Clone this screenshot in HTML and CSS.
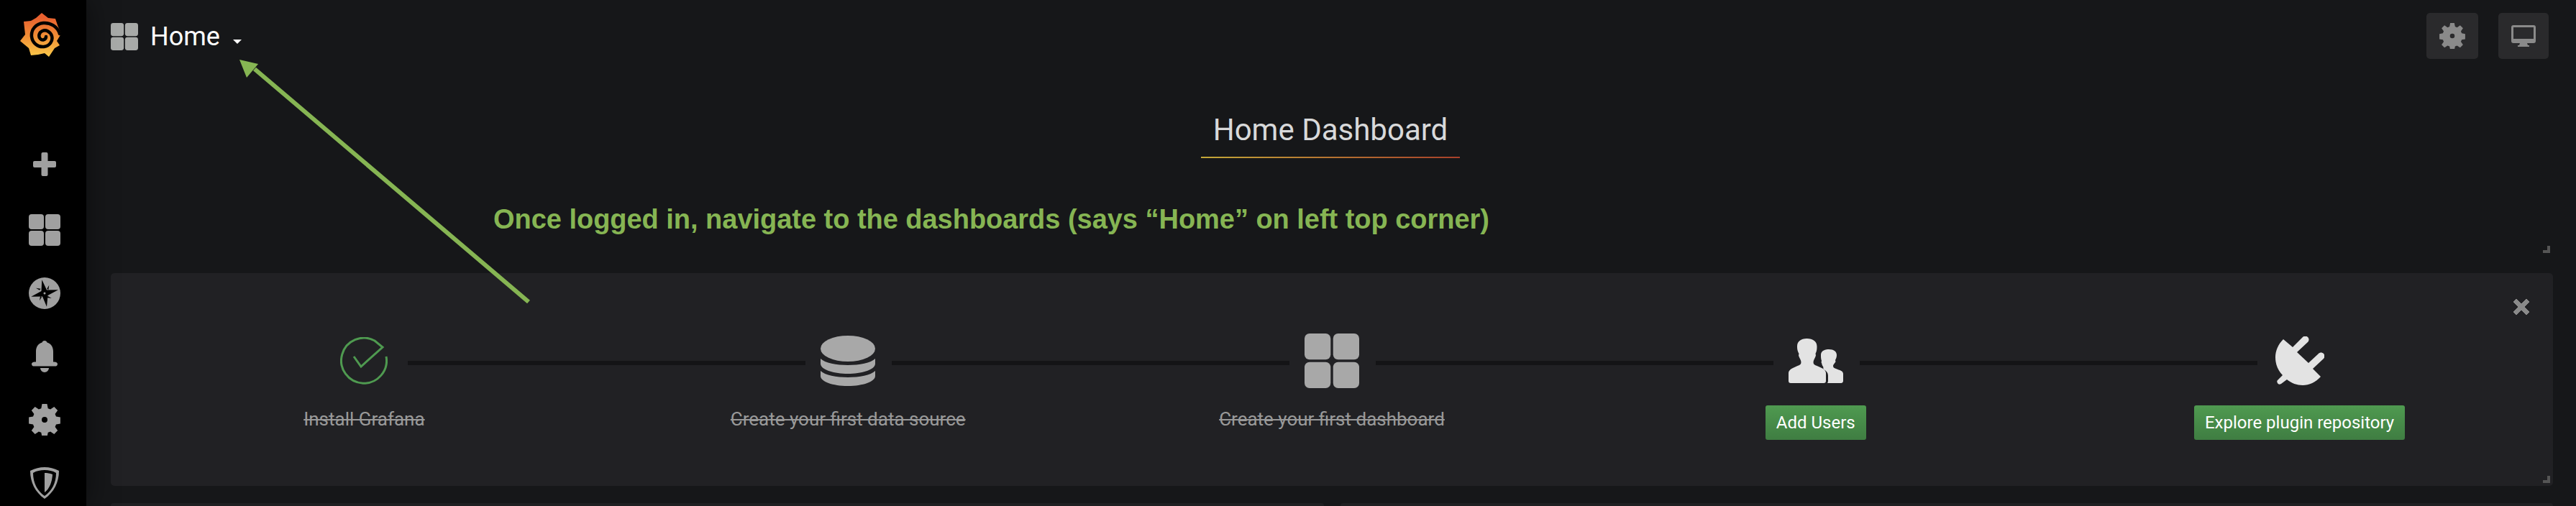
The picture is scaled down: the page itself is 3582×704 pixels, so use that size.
FILE: index.html
```html
<!DOCTYPE html>
<html lang="en">
<head>
  <meta charset="utf-8">
  <title>Home Dashboard</title>
  <link rel="stylesheet" href="styles.css">
</head>
<body>

  <svg width="0" height="0" class="defs">
    <defs>
      <symbol id="ico-grid" viewBox="0 0 44 44">
        <rect x="0" y="0" width="21" height="21" rx="4"/>
        <rect x="23" y="0" width="21" height="21" rx="4"/>
        <rect x="0" y="23" width="21" height="21" rx="4"/>
        <rect x="23" y="23" width="21" height="21" rx="4"/>
      </symbol>
      <symbol id="ico-gear" viewBox="0 0 44 44">
        <path fill-rule="evenodd" d="M18.5 0h7l1.2 6.2 3.4 1.4 5.2-3.6 4.9 4.9-3.6 5.2 1.4 3.4 5.9 1v9l-5.9 1-1.4 3.4 3.6 5.2-4.9 4.9-5.2-3.6-3.4 1.4-1.2 6.1h-7l-1.2-6.1-3.4-1.4-5.2 3.6-4.9-4.9 3.600-5.2-1.4-3.4-5.9-1v-9l5.9-1 1.4-3.4-3.6-5.2 4.9-4.9 5.2 3.6 3.4-1.4zM22 18a4 4 0 1 0 0 8 4 4 0 0 0 0-8z"/>
      </symbol>
    </defs>
  </svg>

  <nav class="sidebar">
    <a class="logo">
      <svg viewBox="0 0 57 62" width="57" height="62">
        <defs>
          <linearGradient id="logoFill" x1="0" y1="0" x2="0" y2="1">
            <stop offset="0.1" stop-color="#e8602f"/>
            <stop offset="0.55" stop-color="#f08f35"/>
            <stop offset="1" stop-color="#fbca4a"/>
          </linearGradient>
        </defs>
        <path fill="url(#logoFill)" d="M30 0L39 7 49 8 52 17 57 29 51 39 55 45 48 49 40 61 34 56 25 58 15 59 12 49 0 39 7 30 5 12 15 11 22 7z"/>
        <path class="logo-spiral" d="M55 29C52 19 42 13 32 14 22 15 15 23 16 33 17 42 25 48 33 47 41 46 46 39 44 32 42 26 36 23 31 25 26 27 25 33 28 36 31 39 36 37 36 33"/>
      </svg>
    </a>
    <ul class="side-menu">
      <li class="side-plus">
        <svg width="32" height="33" viewBox="0 0 32 33"><rect x="11.500" y="0" width="9" height="33" rx="2"/><rect x="0" y="12" width="32" height="9" rx="2"/></svg>
      </li>
      <li><svg width="44" height="44"><use href="#ico-grid"/></svg></li>
      <li>
        <svg width="44" height="44" viewBox="0 0 44 44">
          <circle cx="22" cy="22" r="22"/>
          <path class="star" d="M18.300 3.300L25 17.500 41 17.300 26.500 25 25 40.700 19 26.500 3.300 26.700 17.500 19z"/>
          <path class="star" d="M28.300 10.700l-3 5 2 1.500zM31.700 29l-5-3-1.500 2zM15 32.300l3-5-2-1.500zM10 14.700l5 3 1.500-2z"/>
          <circle cx="22" cy="22" r="1.500"/>
        </svg>
      </li>
      <li>
        <svg width="36" height="44" viewBox="0 0 36 44"><path d="M18 0c2 0 3 1 3.500 2.500C27 4 30 9 30 15v14.500c3 0 6 .5 6 3s-2 3-3 3H3c-1 0-3-.5-3-3s3-3 6-3V15C6 9 9 4 14.500 2.500 15 1 16 0 18 0zM12 38h12c0 3-3 6-6 6s-6-3-6-6z"/></svg>
      </li>
      <li><svg width="44" height="44"><use href="#ico-gear"/></svg></li>
      <li>
        <svg width="40" height="44" viewBox="0 0 40 44"><path fill-rule="evenodd" d="M20 0c7 0 13 1.500 20 5 0 16-7 30-20 39C7 35 0 21 0 5 7 1.500 13 0 20 0zm0 4C14 4 9 5 4 8c0 14 6 25 16 32 10-7 16-18 16-32-5-3-10-4-16-4z"/><path d="M20 8c4 0 7 .5 11 2-.5 10-4 20-11 25z"/></svg>
      </li>
    </ul>
  </nav>

  <main class="main">
    <header class="navbar">
      <div class="dash-picker">
        <svg class="dash-picker-icon" width="38" height="38"><use href="#ico-grid"/></svg>
        <span class="dash-picker-name">Home</span>
        <span class="caret"></span>
      </div>
      <div class="navbar-buttons">
        <button class="nav-btn nav-btn-wide"><svg width="36" height="36"><use href="#ico-gear"/></svg></button>
        <button class="nav-btn">
          <svg width="34" height="30" viewBox="0 0 34 30"><path fill-rule="evenodd" d="M3 0h28a3 3 0 0 1 3 3v19a3 3 0 0 1-3 3H22l1 3h2v2H9v-2h2l1-3H3a3 3 0 0 1-3-3V3a3 3 0 0 1 3-3zm0 3v16h28V3z"/></svg>
        </button>
      </div>
    </header>

    <div class="title-panel">
      <h1 class="panel-title">Home Dashboard</h1>
      <span class="resize-handle"></span>
    </div>

    <section class="getting-started">
      <span class="close-x">
        <svg width="24" height="24" viewBox="0 0 24 24"><path d="M5 1l7 7 7-7 4 4-7 7 7 7-4 4-7-7-7 7-4-4 7-7-7-7z" stroke="#8a8a8a" stroke-width="1" stroke-linejoin="round"/></svg>
      </span>

      <div class="step">
        <div class="step-icon">
          <svg width="66" height="66" viewBox="0 0 66 66" class="ico-check"><path d="M19 27L29 41 59 14 48 5A31.500 31.500 0 1 0 64 27"/></svg>
        </div>
        <span class="step-label done">Install Grafana</span>
      </div>

      <div class="step">
        <div class="step-icon">
          <svg width="76" height="70" viewBox="0 0 76 70" class="ico-done"><ellipse cx="38" cy="18" rx="38" ry="18"/><path d="M0 32c6 6 22 9 38 9s32-3 38-9v7c0 8-17 14-38 14S0 47 0 39z"/><path d="M0 49c6 6 22 9 38 9s32-3 38-9v7c0 8-17 14-38 14S0 64 0 56z"/></svg>
        </div>
        <span class="step-label done">Create your first data source</span>
      </div>

      <div class="step">
        <div class="step-icon">
          <svg width="76" height="76" class="ico-done"><use href="#ico-grid"/></svg>
        </div>
        <span class="step-label done">Create your first dashboard</span>
      </div>

      <div class="step">
        <div class="step-icon">
          <svg width="76" height="62" viewBox="0 0 76 62" class="ico-todo"><path d="M25.500 0C34 0 39.500 4 39.500 11c0 5-.5 7-2 10 0 1 1 2 0 4-1 3-3 5-3 8 0 3 2 4 5 5 6 2.500 12.500 5 12.500 10v11c0 2-1 3-3 3H3c-2 0-3-1-3-3V48c0-5 7-7.500 12.500-10 3-1 5-2 5-5 0-3-2-5-3-8-1-2 0-3 0-4-1.500-3-2.500-5-2.500-10C12 4 17 0 25.500 0z"/><path d="M56 15c7 0 11 3 11 8 0 3-1 5-2 7 0 1 1 2 0 3-1 2-3 3-3 5 0 2 1 3 4 4 5 2 10 3 10 7v10c0 1-1 3-3 3H54c1-1 1-3 1-5V52c0-4-2-7-6-9-.5-1-1-2-.5-3-1-2-2-3-2.500-6-1-1 0-2 0-3-1-3-1-5-1-8 0-5 4-8 11-8z"/></svg>
        </div>
        <a class="btn-success">Add Users</a>
      </div>

      <div class="step step-last">
        <div class="step-icon">
          <svg width="68" height="68" viewBox="0 0 68 68" class="ico-todo"><path d="M11 4L24 15 38 1c2-2 5-2 7 0s2 5 0 7L30 22 46 37 60 24c2-2 5-2 7 0s2 5 0 7L52 45 63 56C56 64 47 68 38 68c-8 0-16-3-22-8l-8 6c-2 1-4 1-5-1s-1-3 0-4l7-7C3 47 0 38 0 29 0 20 4 11 11 4z"/></svg>
        </div>
        <a class="btn-success">Explore plugin repository</a>
      </div>

      <span class="resize-handle"></span>
    </section>

    <div class="lower-panels">
      <div class="lower-panel"></div>
      <div class="lower-panel"></div>
    </div>
  </main>

  <p class="note">Once logged in, navigate to the dashboards (says “Home” on left top corner)</p>
  <svg class="note-arrow" width="420" height="350" viewBox="0 0 420 350">
    <path d="M405 340L24 16" stroke="#86b553" stroke-width="6" fill="none"/>
    <path d="M3 3L29 9 13 28z" fill="#86b553"/>
  </svg>

</body>
</html>
```

FILE: styles.css
```css
html, body {
  height: 100%;
}

body {
  margin: 0;
  display: flex;
  height: 704px;
  overflow: hidden;
  background-color: #161719;
  font-family: Roboto, "Liberation Sans", sans-serif;
  color: #d8d9da;
}

.defs {
  position: absolute;
}

/* left menu */
.sidebar {
  flex: 0 0 120px;
  height: 704px;
  background-color: #000;
  box-shadow: 0 0 40px rgba(0, 0, 0, 0.5);
  z-index: 1;
}

.logo {
  display: block;
  padding: 18px 0 0 28px;
  height: 62px;
}

.logo-spiral {
  fill: none;
  stroke: #000;
  stroke-width: 4.500;
  stroke-linecap: round;
}

.side-menu {
  list-style: none;
  margin: 0;
  padding: 0;
}

.side-menu li {
  height: 88px;
  display: flex;
  align-items: center;
  justify-content: center;
  margin-left: 4px;
}

.side-menu li:last-child {
  height: 76px;
  align-items: flex-start;
  padding-top: 22px;
  box-sizing: border-box;
}

.side-menu .side-plus {
  margin-top: 104px;
  margin-bottom: 4px;
}

.side-menu svg {
  fill: #a0a0a0;
}

.side-menu .star {
  fill: #000;
}

/* top bar */
.main {
  flex: 1;
  min-width: 0;
  padding: 0 32px 0 34px;
}

.navbar {
  height: 100px;
  display: flex;
  justify-content: space-between;
  padding-top: 18px;
  box-sizing: border-box;
}

.dash-picker {
  display: flex;
  align-items: center;
  height: 46px;
  margin-top: 10px;
}

.dash-picker-icon {
  fill: #a8aaa8;
}

.dash-picker-name {
  font-size: 36px;
  color: #fff;
  margin-left: 17px;
}

.caret {
  width: 0;
  height: 0;
  margin: 14px 0 0 18px;
  border-style: solid;
  border-width: 6px 6px 0;
  border-color: #fff transparent transparent;
}

.navbar-buttons {
  display: flex;
  gap: 28px;
  margin-right: 6px;
}

.nav-btn {
  width: 70px;
  height: 64px;
  padding: 0;
  display: flex;
  align-items: center;
  justify-content: center;
  background-color: #2a2a2c;
  border: none;
  border-radius: 5px;
}

.nav-btn-wide {
  width: 72px;
}

.nav-btn svg {
  fill: #8a8a8a;
}

/* title panel */
.title-panel {
  position: relative;
  height: 280px;
  padding-right: 4px;
}

.panel-title {
  width: 360px;
  height: 120px;
  margin: 0 auto;
  box-sizing: border-box;
  padding-top: 56px;
  border-bottom: 2px solid;
  border-image: linear-gradient(to right, #c4a838, #a8402a) 1;
  font-size: 42px;
  font-weight: 400;
  line-height: 50px;
  text-align: center;
  color: #d8d9da;
}

.resize-handle {
  position: absolute;
  right: 4px;
  bottom: 4px;
  width: 10px;
  height: 10px;
  box-sizing: border-box;
  border-right: 4px solid #555;
  border-bottom: 4px solid #555;
}

.title-panel .resize-handle {
  bottom: 28px;
}

/* getting started row */
.getting-started {
  position: relative;
  display: flex;
  height: 296px;
  padding: 0 16px;
  box-sizing: border-box;
  background-color: #212124;
  border-radius: 5px;
}

.step {
  position: relative;
  flex: 1;
  text-align: center;
}

.step::after {
  content: "";
  position: absolute;
  left: calc(50% + 61px);
  top: 122px;
  width: 553px;
  height: 6px;
  background-color: #141416;
}

.step-last::after {
  display: none;
}

.step-icon {
  height: 76px;
  margin-top: 84px;
  display: flex;
  justify-content: center;
  align-items: center;
}

.ico-check {
  fill: none;
  stroke: #4f9a50;
  stroke-width: 3;
}

.ico-done {
  fill: #a8a8a8;
}

.ico-todo {
  fill: #e3e3e3;
}

.step-label {
  display: block;
  margin-top: 28px;
  font-size: 26px;
  line-height: 30px;
  color: #999;
}

.done {
  text-decoration: line-through;
}

.btn-success {
  display: inline-block;
  margin-top: 24px;
  padding: 0 15px;
  height: 48px;
  line-height: 48px;
  font-size: 24px;
  color: #fff;
  background: linear-gradient(to bottom, #4f9a50, #3f7d42);
  border-radius: 3px;
}

.close-x {
  position: absolute;
  right: 32px;
  top: 35px;
  z-index: 1;
}

.close-x svg {
  display: block;
  fill: #8a8a8a;
}

.lower-panels {
  display: flex;
  gap: 23px;
  margin-top: 24px;
}

.lower-panel {
  flex: 1;
  height: 4px;
  background-color: #1f2022;
  border-radius: 5px 5px 0 0;
}

/* annotation on top of the screenshot */
.note {
  position: absolute;
  left: 686px;
  top: 282px;
  margin: 0;
  font-family: "Liberation Sans", Arial, sans-serif;
  font-weight: 700;
  font-size: 38px;
  line-height: 46px;
  letter-spacing: -0.03px;
  white-space: nowrap;
  color: #86b553;
}

.note-arrow {
  position: absolute;
  left: 330px;
  top: 80px;
  z-index: 2;
}
```
